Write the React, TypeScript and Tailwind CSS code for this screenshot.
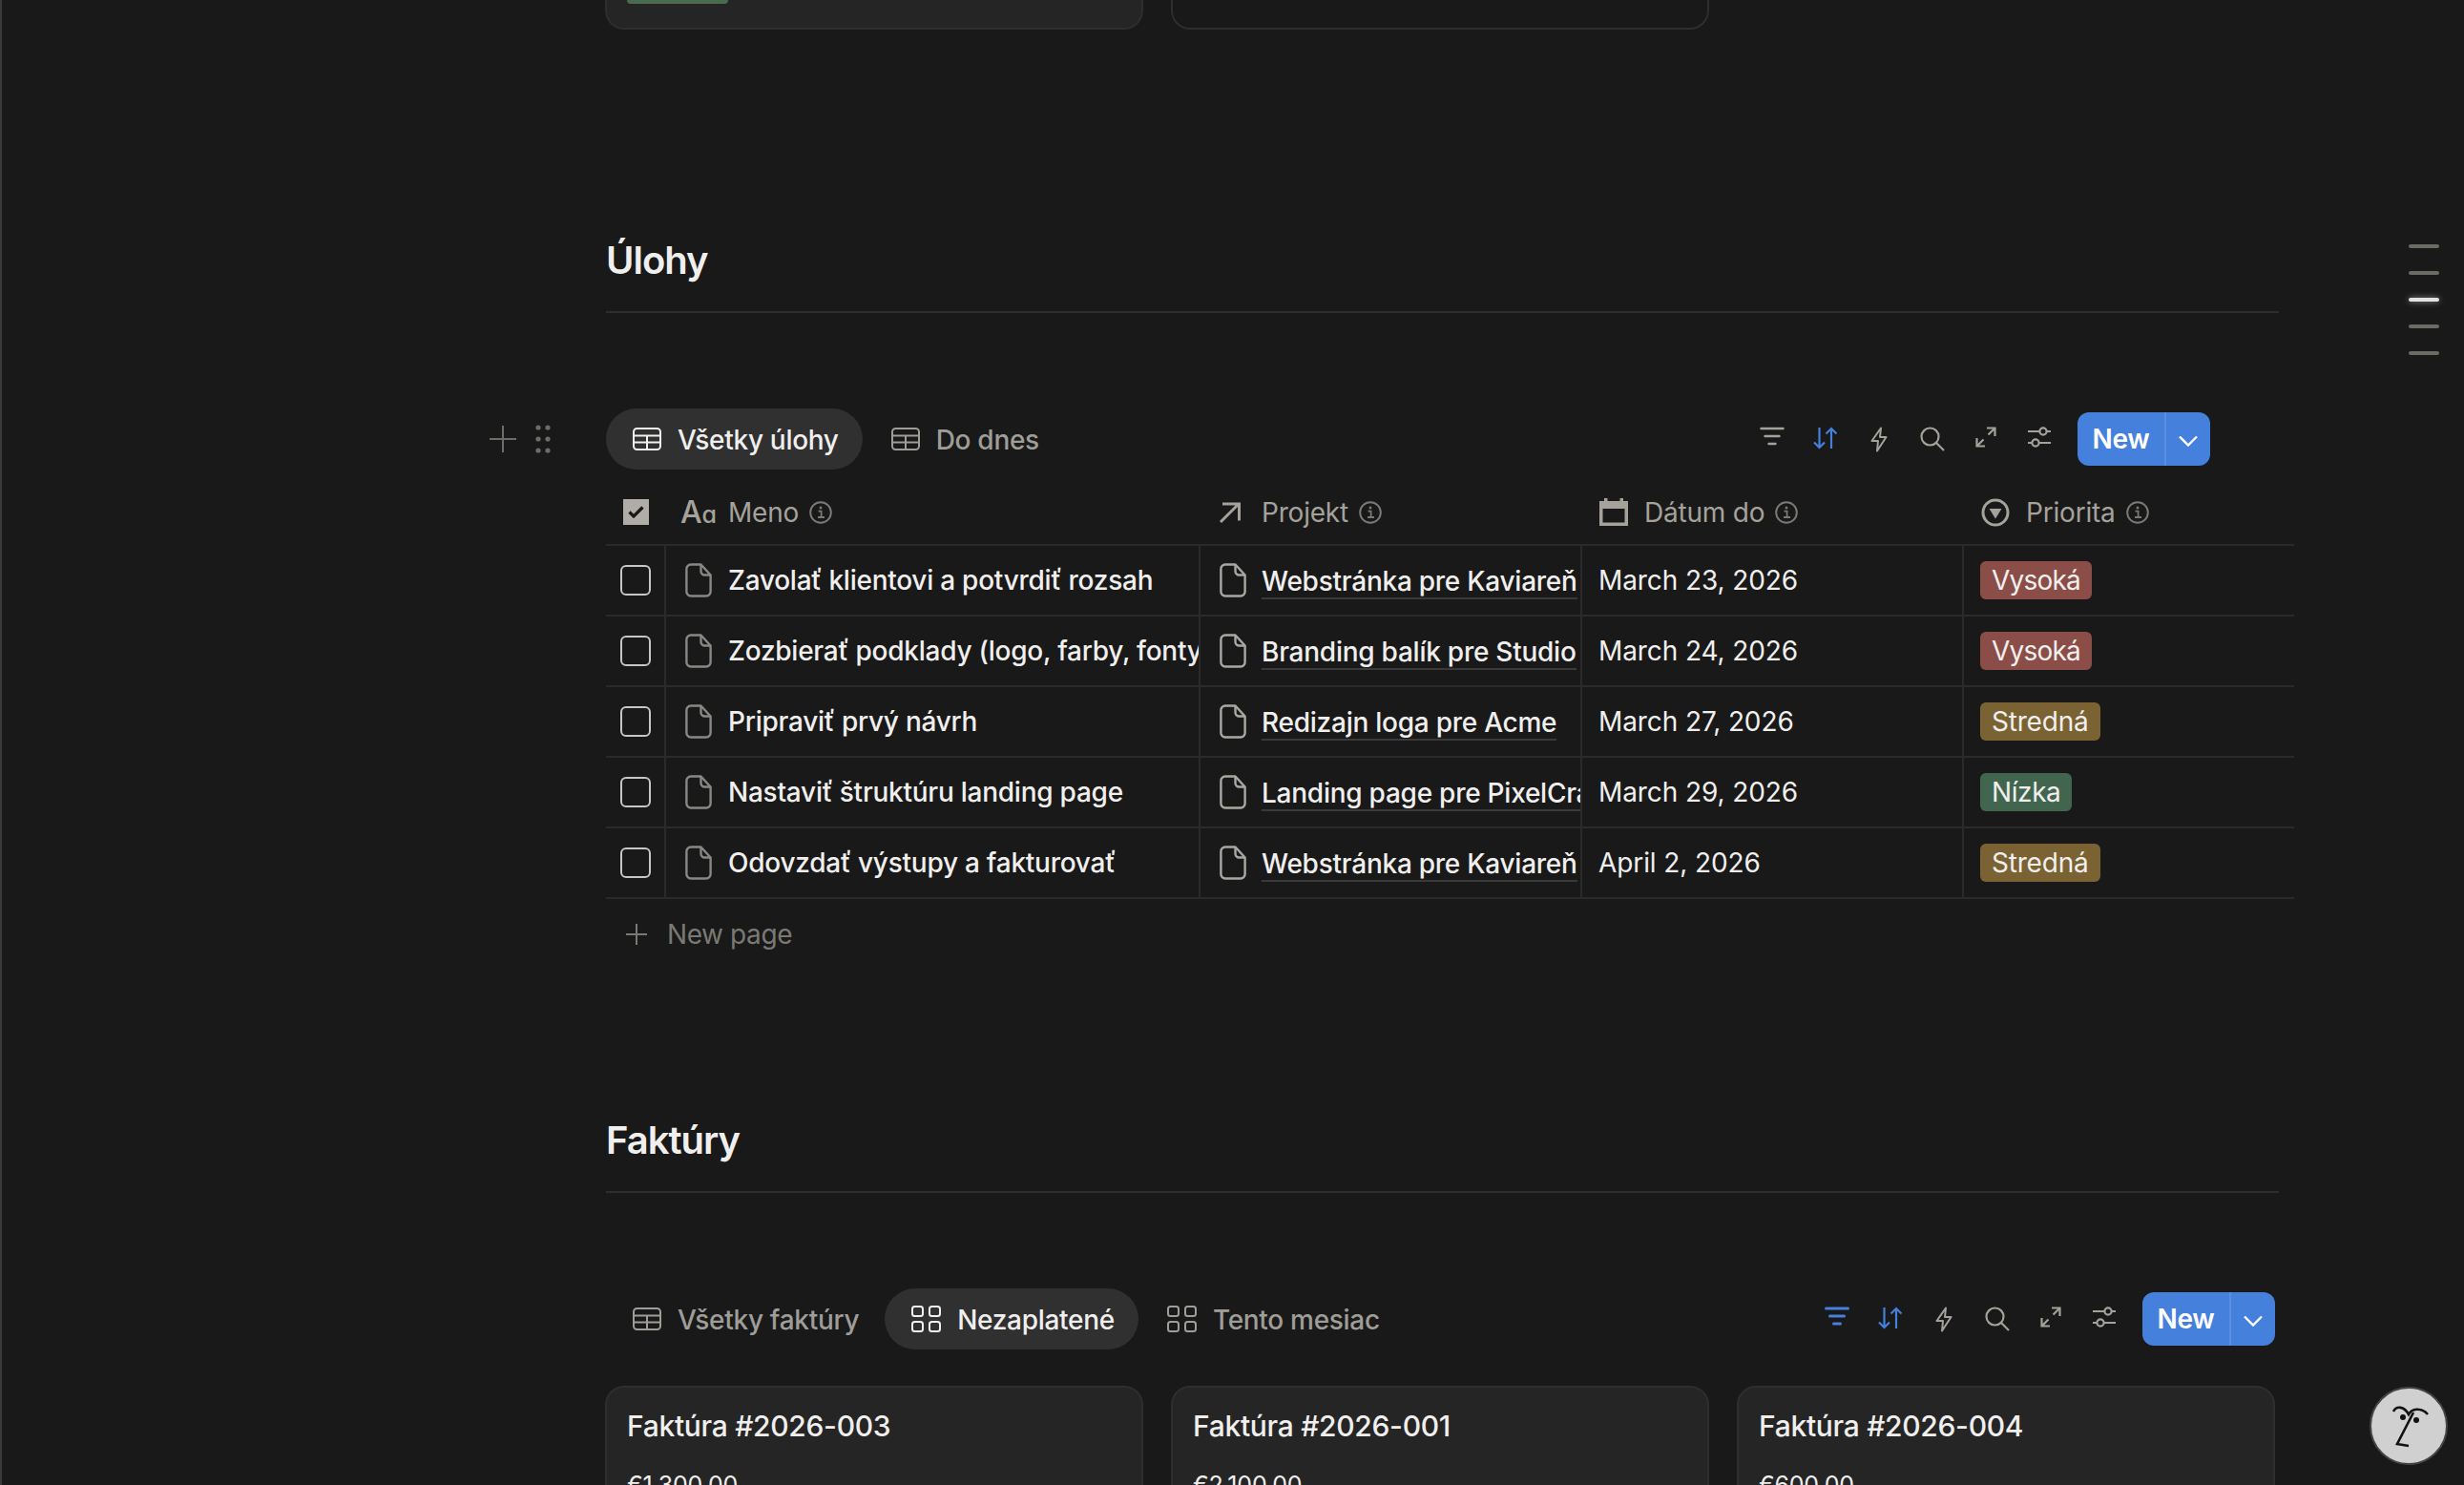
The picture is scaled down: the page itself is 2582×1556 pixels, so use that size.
import type { ReactNode } from "react";

type TaskRow = {
  name: string;
  project: string;
  date: string;
  priority: "Vysoká" | "Stredná" | "Nízka";
};

const tasks: TaskRow[] = [
  { name: "Zavolať klientovi a potvrdiť rozsah", project: "Webstránka pre Kaviareň", date: "March 23, 2026", priority: "Vysoká" },
  { name: "Zozbierať podklady (logo, farby, fonty)", project: "Branding balík pre Studio", date: "March 24, 2026", priority: "Vysoká" },
  { name: "Pripraviť prvý návrh", project: "Redizajn loga pre Acme", date: "March 27, 2026", priority: "Stredná" },
  { name: "Nastaviť štruktúru landing page", project: "Landing page pre PixelCraft", date: "March 29, 2026", priority: "Nízka" },
  { name: "Odovzdať výstupy a fakturovať", project: "Webstránka pre Kaviareň", date: "April 2, 2026", priority: "Stredná" },
];

const priorityClass = {
  Vysoká: "bg-[#8a4d47] tracking-[-0.8px]",
  Stredná: "bg-[#7a6233] tracking-[-0.2px]",
  Nízka: "bg-[#426550] tracking-[-0.4px]",
};

const invoices = [
  { title: "Faktúra #2026-003", amount: "€1,300.00" },
  { title: "Faktúra #2026-001", amount: "€2,100.00" },
  { title: "Faktúra #2026-004", amount: "€600.00" },
];

function TableIcon() {
  return (
    <svg width="30" height="24" viewBox="0 0 30 24" fill="none" stroke="currentColor" strokeWidth="2">
      <rect x="1" y="1" width="28" height="22" rx="3.5" />
      <path d="M1 8.5H29M1 15.5H29M15 8.5V23" />
    </svg>
  );
}

function GalleryIcon() {
  return (
    <svg width="31" height="28" viewBox="0 0 31 28" fill="none" stroke="currentColor" strokeWidth="2">
      <rect x="1" y="1" width="11" height="10" rx="2.5" />
      <rect x="19" y="1" width="11" height="10" rx="2.5" />
      <rect x="1" y="17" width="11" height="10" rx="2.5" />
      <rect x="19" y="17" width="11" height="10" rx="2.5" />
    </svg>
  );
}

function InfoIcon() {
  return (
    <svg width="24" height="24" viewBox="0 0 24 24" fill="none" className="text-[#7b7975]">
      <circle cx="12" cy="12" r="10.8" stroke="currentColor" strokeWidth="2" />
      <circle cx="12" cy="7" r="1.5" fill="currentColor" />
      <path d="M9.5 10.6H12.6V16.6M9 17H16" stroke="currentColor" strokeWidth="1.8" />
    </svg>
  );
}

function PageIcon({ className }: { className: string }) {
  return (
    <svg width="28" height="36" viewBox="0 0 28 36" fill="none" stroke="currentColor" strokeWidth="2.4" className={className}>
      <path d="M6 1.5H16.5L26.6 12.5V30A4.5 4.5 0 0 1 22 34.5H6A4.5 4.5 0 0 1 1.4 30V6A4.5 4.5 0 0 1 6 1.5Z" strokeLinejoin="round" />
      <path d="M16.5 1.5V8.5A4 4 0 0 0 20.5 12.5H26.6" />
    </svg>
  );
}

function PlusIcon({ size, className }: { size: number; className: string }) {
  const mid = size / 2;
  return (
    <svg width={size} height={size} viewBox={`0 0 ${size} ${size}`} fill="none" stroke="currentColor" strokeWidth="2" className={className}>
      <path d={`M0 ${mid}H${size}M${mid} 0V${size}`} />
    </svg>
  );
}

function GripIcon() {
  return (
    <svg width="16" height="30" viewBox="0 0 16 30" fill="currentColor" className="text-[#6e6c68]">
      <circle cx="3" cy="3" r="2.6" />
      <circle cx="13" cy="3" r="2.6" />
      <circle cx="3" cy="15" r="2.6" />
      <circle cx="13" cy="15" r="2.6" />
      <circle cx="3" cy="27" r="2.6" />
      <circle cx="13" cy="27" r="2.6" />
    </svg>
  );
}

function FilterIcon({ active }: { active: boolean }) {
  return (
    <svg width="26" height="20" viewBox="0 0 26 20" fill="none" stroke="currentColor" strokeWidth={active ? 3 : 2.4} strokeLinecap="round" className={active ? "text-[#4480dc]" : "text-[#a5a29c]"}>
      <path d="M1.5 2H24.5M5.5 10H20.5M9.5 18H16.5" />
    </svg>
  );
}

function SortIcon() {
  return (
    <svg width="26" height="24" viewBox="0 0 26 24" fill="none" stroke="currentColor" strokeWidth="2.2" className="text-[#4480dc]">
      <path d="M6.5 1V22M1 16.5L6.5 22L12 16.5M19 23V2M13.5 7.5L19 2L24.5 7.5" />
    </svg>
  );
}

function BoltIcon() {
  return (
    <svg width="18" height="27" viewBox="0 0 18 27" fill="none" stroke="currentColor" strokeWidth="2" strokeLinejoin="round" className="text-[#a5a29c]">
      <path d="M11 1.5L1.5 15H8L7 25.5L16.5 11H10Z" />
    </svg>
  );
}

function SearchIcon() {
  return (
    <svg width="26" height="26" viewBox="0 0 26 26" fill="none" stroke="currentColor" strokeWidth="2.2" className="text-[#a5a29c]">
      <circle cx="10.5" cy="10.5" r="9" />
      <path d="M17 17L25 25" />
    </svg>
  );
}

function ExpandIcon() {
  return (
    <svg width="22" height="22" viewBox="0 0 22 22" fill="none" stroke="currentColor" strokeWidth="2.2" className="text-[#a5a29c]">
      <path d="M1.5 20.5L8.5 13.5M13.5 8.5L20.5 1.5M12 1.5H20.5V10M1.5 12V20.5H10" />
    </svg>
  );
}

function SlidersIcon() {
  return (
    <svg width="26" height="22" viewBox="0 0 26 22" fill="none" stroke="currentColor" strokeWidth="2.2" className="text-[#a5a29c]">
      <path d="M1 5H13M21 5H25M1 17H5M13 17H25" />
      <circle cx="17" cy="5" r="3.6" />
      <circle cx="9" cy="17" r="3.6" />
    </svg>
  );
}

function Chevron() {
  return (
    <svg width="20" height="12" viewBox="0 0 20 12" fill="none" stroke="currentColor" strokeWidth="2.4">
      <path d="M1 1.5L10 10.5L19 1.5" />
    </svg>
  );
}

function CalendarIcon() {
  return (
    <svg width="30" height="29" viewBox="0 0 30 29" fill="none" className="text-[#a5a29c]">
      <path fillRule="evenodd" clipRule="evenodd" fill="currentColor" d="M5 0H8.5V3H21.5V0H25V3H30V29H0V3H5ZM3.5 11V25.5H26.5V11Z" />
    </svg>
  );
}

function PriorityIcon() {
  return (
    <svg width="30" height="30" viewBox="0 0 30 30" fill="none" className="text-[#a5a29c]">
      <circle cx="15" cy="15" r="13" stroke="currentColor" strokeWidth="3" />
      <path d="M8.5 11H21.5L15 21.5Z" fill="currentColor" />
    </svg>
  );
}

function ArrowIcon() {
  return (
    <svg width="24" height="24" viewBox="0 0 24 24" fill="none" stroke="currentColor" strokeWidth="3" className="text-[#a5a29c]">
      <path d="M2 22L21 3M4 3H21.5V20.5" />
    </svg>
  );
}

function Tab({ icon, label, active }: { icon: ReactNode; label: string; active?: boolean }) {
  return (
    <div className={`flex h-16 items-center gap-[17px] rounded-full pr-[25px] pl-7 text-[28px] font-medium tracking-[-0.3px] ${active ? "bg-[#303030] text-[#f0efed]" : "text-[#9f9d98]"}`}>
      {icon}
      <span className="pt-0.5">{label}</span>
    </div>
  );
}

function Toolbar({ filterActive }: { filterActive: boolean }) {
  return (
    <div className="flex items-center">
      <div className="mr-[12px] flex">
        <span className="flex w-14 justify-center"><FilterIcon active={filterActive} /></span>
        <span className="flex w-14 justify-center"><SortIcon /></span>
        <span className="flex w-14 justify-center"><BoltIcon /></span>
        <span className="flex w-14 justify-center"><SearchIcon /></span>
        <span className="flex w-14 justify-center"><ExpandIcon /></span>
        <span className="flex w-14 justify-center"><SlidersIcon /></span>
      </div>
      <div className="flex h-14 w-[139px] items-center rounded-[12px] bg-[#4480dc] text-white">
        <span className="flex h-full w-[93px] items-center justify-center border-r-2 border-[#5a8fe0] text-[28px] font-semibold tracking-[-0.3px]">New</span>
        <span className="flex flex-1 items-center justify-center pt-1"><Chevron /></span>
      </div>
    </div>
  );
}

function SectionTitle({ title }: { title: string }) {
  return (
    <div className="w-[1753px] border-b-2 border-[#2e2e2e] pb-[25px]">
      <h2 className="text-[40px] leading-[56px] font-semibold tracking-[-1px] text-[#f0efed]">{title}</h2>
    </div>
  );
}

function HeaderCell({ icon, label, className }: { icon: ReactNode; label: string; className: string }) {
  return (
    <div className={`flex h-full items-center pt-[11px] text-[28px] tracking-[-0.2px] text-[#a5a29c] ${className}`}>
      {icon}
      <span>{label}</span>
      <span className="ml-[11px]"><InfoIcon /></span>
    </div>
  );
}

function TaskTable() {
  return (
    <div className="w-[1769px]">
      <div className="grid h-[80px] grid-cols-[63px_560px_400px_400px_346px] border-b-2 border-[#2a2a2a]">
        <div className="flex items-center pt-[11px] pl-[18px]">
          <div className="flex h-[27px] w-[27px] items-center justify-center bg-[#b0ada8] text-[#191919]">
            <svg width="17" height="13" viewBox="0 0 17 13" fill="none" stroke="currentColor" strokeWidth="3.2">
              <path d="M1.5 6.5L6 11L15.5 1.5" />
            </svg>
          </div>
        </div>
        <HeaderCell
          className="pl-[15px]"
          icon={
            <span className="mr-[14px] w-[36px] font-medium whitespace-nowrap">
              <span className="text-[32px]">A</span>
              <span className="text-[25px]">ɑ</span>
            </span>
          }
          label="Meno"
        />
        <HeaderCell className="pl-[19px]" icon={<span className="mr-[21px]"><ArrowIcon /></span>} label="Projekt" />
        <HeaderCell className="pl-[18px]" icon={<span className="mr-[17px]"><CalendarIcon /></span>} label="Dátum do" />
        <HeaderCell className="pl-[18px]" icon={<span className="mr-[17px]"><PriorityIcon /></span>} label="Priorita" />
      </div>
      {tasks.map((task) => (
        <div key={task.name} className="grid h-[74px] grid-cols-[63px_560px_400px_400px_346px] border-b-2 border-[#2a2a2a] text-[28px] text-[#f0efed]">
          <div className="flex items-center justify-center border-r-2 border-[#2a2a2a]">
            <div className="h-8 w-8 rounded-[6px] border-2 border-[#c8c6c3]" />
          </div>
          <div className="flex items-center overflow-hidden border-r-2 border-[#2a2a2a] pl-[20px]">
            <PageIcon className="shrink-0 text-[#8a8884]" />
            <span className="ml-[17px] font-medium tracking-[-0.25px] whitespace-nowrap">{task.name}</span>
          </div>
          <div className="flex items-center overflow-hidden border-r-2 border-[#2a2a2a] pl-[20px]">
            <PageIcon className="shrink-0 text-[#aaa8a3]" />
            <span className="ml-[16px] border-b-2 border-[#3a3a3a] pt-[3px] leading-[34px] font-medium tracking-[-0.25px] whitespace-nowrap">{task.project}</span>
          </div>
          <div className="flex items-center border-r-2 border-[#2a2a2a] pl-[17px] tracking-[-0.1px]">{task.date}</div>
          <div className="flex items-center pl-[17px]">
            <span className={`flex h-10 items-center rounded-[6px] px-3 ${priorityClass[task.priority]}`}>{task.priority}</span>
          </div>
        </div>
      ))}
      <div className="flex h-[74px] items-center pl-[21px] text-[28px] tracking-[-0.4px] text-[#7b7974]">
        <PlusIcon size={22} className="" />
        <span className="ml-[21px]">New page</span>
      </div>
    </div>
  );
}

function InvoiceCard({ title, amount }: { title: string; amount: string }) {
  return (
    <div className="h-[200px] w-[564px] shrink-0 rounded-[20px] border-2 border-[#2e2e2e] bg-[#252525] pt-[18px] pl-[21px]">
      <div className="text-[30px] leading-[44px] font-medium tracking-[-0.3px] text-[#f0efed]">{title}</div>
      <div className="mt-[22px] text-[25px] leading-[36px] tracking-[-0.2px] text-[#f0efed]">{amount}</div>
    </div>
  );
}

export default function App() {
  return (
    <div className="relative h-[1556px] w-[2582px] overflow-hidden border-l-2 border-[#3a3a3a] bg-[#191919] font-['Inter',sans-serif]">
      <main className="ml-[633px]">
        {/* koniec predchádzajúcej galérie, zvyšok je odscrollovaný */}
        <div className="-ml-px flex h-[31px] gap-[29px]">
          <div className="h-full w-[564px] rounded-b-[20px] border-x-2 border-b-2 border-[#2e2e2e] bg-[#252525] pl-[21px]">
            <div className="h-1 w-[106px] rounded-b-[4px] bg-[#4a6b50]" />
          </div>
          <div className="h-full w-[564px] rounded-b-[20px] border-x-2 border-b-2 border-[#2e2e2e]" />
        </div>

        <div className="pt-[214px]">
          <SectionTitle title="Úlohy" />
        </div>

        <div className="mt-[100px] flex h-16 w-[1681px] items-center justify-between">
          <div className="flex items-center gap-[2px]">
            <Tab icon={<TableIcon />} label="Všetky úlohy" active />
            <Tab icon={<TableIcon />} label="Do dnes" />
          </div>
          <Toolbar filterActive={false} />
        </div>
        <TaskTable />

        <div className="pt-[151px]">
          <SectionTitle title="Faktúry" />
        </div>

        <div className="mt-[100px] flex h-16 w-[1749px] items-center justify-between">
          <div className="flex items-center gap-[2px]">
            <Tab icon={<TableIcon />} label="Všetky faktúry" />
            <Tab icon={<GalleryIcon />} label="Nezaplatené" active />
            <Tab icon={<GalleryIcon />} label="Tento mesiac" />
          </div>
          <Toolbar filterActive />
        </div>

        <div className="mt-[38px] -ml-px flex gap-[29px]">
          {invoices.map((invoice) => (
            <InvoiceCard key={invoice.title} title={invoice.title} amount={invoice.amount} />
          ))}
        </div>
      </main>

      {/* tlačidlá bloku v ľavom okraji */}
      <div className="absolute top-[445px] left-[511px] flex items-center gap-[20px]">
        <PlusIcon size={28} className="text-[#6e6c68]" />
        <GripIcon />
      </div>

      {/* outline vpravo */}
      <div className="absolute top-[256px] left-[2522px] flex w-8 flex-col gap-6">
        <div className="h-1 rounded-full bg-[#6b6a65]" />
        <div className="h-1 rounded-full bg-[#6b6a65]" />
        <div className="h-1 rounded-full bg-[#e3e3e3] shadow-[0_0_6px_rgba(255,255,255,0.5)]" />
        <div className="h-1 rounded-full bg-[#6b6a65]" />
        <div className="h-1 rounded-full bg-[#6b6a65]" />
      </div>

      {/* Notion AI */}
      <div className="absolute top-[1453px] left-[2481px] h-[82px] w-[82px] rounded-full border-2 border-[#444444] bg-[#d0d0d0]">
        <svg width="82" height="82" viewBox="0 0 82 82" fill="none" stroke="#111111" strokeWidth="2.6" className="-m-[2px]">
          <path d="M25 26C28 20 36 20 41 29C44 23 54 21 61 29" />
          <path d="M46 27L29 60L41 62" />
          <circle cx="35" cy="32" r="3" fill="#111111" stroke="none" />
          <circle cx="49" cy="35" r="3" fill="#111111" stroke="none" />
        </svg>
      </div>
    </div>
  );
}
